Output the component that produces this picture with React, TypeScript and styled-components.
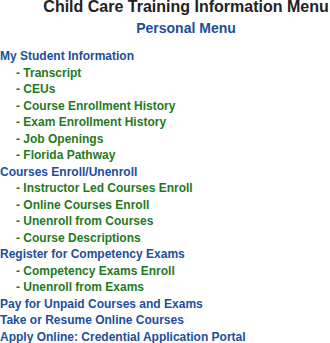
import styled, { createGlobalStyle } from 'styled-components'

const GlobalStyle = createGlobalStyle`
  html, body {
    margin: 0;
    padding: 0;
    background: #ffffff;
    overflow: hidden;
  }
  body {
    font-family: 'Liberation Sans', Arial, sans-serif;
  }
`

const Page = styled.div`
  width: 330px;
  display: flex;
  flex-direction: column;
`

const Heading = styled.div`
  box-sizing: border-box;
  width: 330px;
  padding-left: 42px;
  text-align: center;
`

const Title = styled.h1`
  margin: 0;
  font-size: 16px;
  line-height: 14px;
  font-weight: bold;
  color: #222222;
  white-space: nowrap;
`

const SubTitle = styled.h2`
  margin: 6px 0 0;
  font-size: 14px;
  line-height: 16px;
  font-weight: bold;
  color: #1c4f9c;
`

const Menu = styled.ul`
  list-style: none;
  margin: 12px 0 0;
  padding: 0;
`

const Section = styled.li`
  font-size: 12px;
  line-height: 16.5px;
  font-weight: bold;
  color: #1c4f9c;
  white-space: nowrap;
`

const SubList = styled.ul`
  list-style: none;
  margin: 0;
  padding: 0;
`

const SubItem = styled.li`
  padding-left: 16px;
  font-size: 12px;
  line-height: 16.5px;
  font-weight: bold;
  color: #1f7a1f;
  white-space: nowrap;
`

const menu = [
  {
    title: 'My Student Information',
    items: [
      'Transcript',
      'CEUs',
      'Course Enrollment History',
      'Exam Enrollment History',
      'Job Openings',
      'Florida Pathway',
    ],
  },
  {
    title: 'Courses Enroll/Unenroll',
    items: [
      'Instructor Led Courses Enroll',
      'Online Courses Enroll',
      'Unenroll from Courses',
      'Course Descriptions',
    ],
  },
  {
    title: 'Register for Competency Exams',
    items: ['Competency Exams Enroll', 'Unenroll from Exams'],
  },
  { title: 'Pay for Unpaid Courses and Exams', items: [] },
  { title: 'Take or Resume Online Courses', items: [] },
  { title: 'Apply Online: Credential Application Portal', items: [] },
]

function App() {
  return (
    <Page>
      <GlobalStyle />
      <Heading>
        <Title>Child Care Training Information Menu</Title>
        <SubTitle>Personal Menu</SubTitle>
      </Heading>
      <Menu>
        {menu.map((section) => (
          <Section key={section.title}>
            {section.title}
            {section.items.length > 0 && (
              <SubList>
                {section.items.map((item) => (
                  <SubItem key={item}>- {item}</SubItem>
                ))}
              </SubList>
            )}
          </Section>
        ))}
      </Menu>
    </Page>
  )
}

export default App
